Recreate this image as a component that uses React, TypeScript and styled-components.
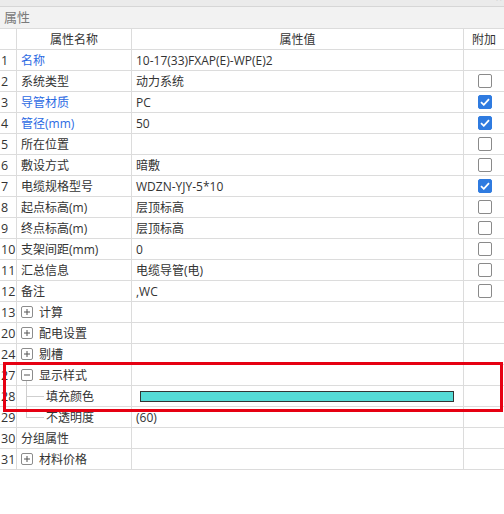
import React from "react";
import styled, { createGlobalStyle } from "styled-components";

const Global = createGlobalStyle`
  html, body { margin: 0; padding: 0; background: #fff; }
  body { font-family: "Open Sans", "Noto Sans CJK SC", sans-serif; font-size: 12px; color: #333; }
`;

const Panel = styled.div`
  position: relative;
  width: 504px;
  height: 514px;
  background: #fff;
  overflow: hidden;
`;

const TopStrip = styled.div`
  height: 6px;
  background: #ebebeb;
  border-bottom: 1px solid #d6d6d6;
  position: relative;
  overflow: hidden;
`;

const CloseMark = styled.span`
  position: absolute;
  right: 2px;
  top: -8px;
  font-size: 11px;
  line-height: 12px;
  color: #aaa;
`;

const Title = styled.div`
  height: 21px;
  line-height: 21px;
  background: #f2f2f2;
  color: #7a7a7a;
  padding-left: 4px;
  font-size: 13px;
  border-bottom: 1px solid #dcdcdc;
`;

const Grid = styled.div`
  display: grid;
  grid-template-columns: 17px 115px 332px 40px;
  grid-auto-rows: 21px;
`;

const Cell = styled.div<{ $center?: boolean; $blue?: boolean }>`
  border-right: 1px solid #dcdcdc;
  border-bottom: 1px solid #dcdcdc;
  display: flex;
  align-items: center;
  justify-content: ${(p) => (p.$center ? "center" : "flex-start")};
  padding-left: ${(p) => (p.$center ? "0" : "4px")};
  color: ${(p) => (p.$blue ? "#2d6be3" : "#333")};
  white-space: nowrap;
  overflow: visible;
  position: relative;
  box-sizing: border-box;
  &:nth-child(4n) { border-right: none; }
`;

const NumCell = styled(Cell)`
  padding-left: 1px;
  font-size: 12.5px;
  color: #333;
`;

const Box = styled.span<{ $checked?: boolean }>`
  width: 14px;
  height: 14px;
  box-sizing: border-box;
  border-radius: 2px;
  border: 1px solid ${(p) => (p.$checked ? "#2f7be0" : "#8a8a8a")};
  background: ${(p) => (p.$checked ? "#2f7be0" : "#fff")};
  display: flex;
  align-items: center;
  justify-content: center;
  margin-left: 1px;
`;

const Toggle = styled.span`
  width: 12px;
  height: 12px;
  box-sizing: border-box;
  border: 1px solid #8c8c8c;
  border-radius: 2px;
  display: inline-flex;
  align-items: center;
  justify-content: center;
  margin: 0 6px 0 0;
  flex: none;
`;

const Label = styled.span<{ $indent?: number }>`
  padding-left: ${(p) => p.$indent ?? 0}px;
`;

const TreeLine = styled.span<{ $last?: boolean }>`
  position: absolute;
  left: 9px;
  top: -1px;
  height: ${(p) => (p.$last ? "12px" : "22px")};
  width: 17px;
  border-left: 1px solid #cfcfcf;
  pointer-events: none;
  &::after {
    content: "";
    position: absolute;
    left: 0;
    top: 11px;
    width: 17px;
    border-top: 1px solid #cfcfcf;
  }
`;

const ToggleStem = styled.span`
  position: absolute;
  left: 9px;
  top: 16px;
  height: 5px;
  border-left: 1px solid #cfcfcf;
`;

const ColorBar = styled.span`
  display: block;
  width: 314px;
  height: 11px;
  box-sizing: border-box;
  border: 1px solid #333;
  background: #55dbd6;
  margin-left: 4px;
`;

const Highlight = styled.div`
  position: absolute;
  left: 3px;
  top: 362px;
  width: 500px;
  height: 50px;
  box-sizing: border-box;
  border: 3px solid #e60012;
  pointer-events: none;
`;

const Check = () => (
  <svg width="10" height="8" viewBox="0 0 10 8">
    <path d="M1 4.2 L3.8 6.8 L9 1.2" fill="none" stroke="#fff" strokeWidth="1.8" />
  </svg>
);

const PlusMinus = ({ plus }: { plus: boolean }) => (
  <svg width="8" height="8" viewBox="0 0 8 8">
    <path d={plus ? "M1 4 H7 M4 1 V7" : "M1 4 H7"} stroke="#555" strokeWidth="1" fill="none" />
  </svg>
);

type Row = {
  n: number;
  name: string;
  value?: string;
  blue?: boolean;
  check?: "on" | "off";
  toggle?: "+" | "-";
  kind?: "child" | "childLast";
  bar?: boolean;
};

const rows: Row[] = [
  { n: 1, name: "名称", value: "10-17(33)FXAP(E)-WP(E)2", blue: true },
  { n: 2, name: "系统类型", value: "动力系统", check: "off" },
  { n: 3, name: "导管材质", value: "PC", blue: true, check: "on" },
  { n: 4, name: "管径(mm)", value: "50", blue: true, check: "on" },
  { n: 5, name: "所在位置", value: "", check: "off" },
  { n: 6, name: "敷设方式", value: "暗敷", check: "off" },
  { n: 7, name: "电缆规格型号", value: "WDZN-YJY-5*10", check: "on" },
  { n: 8, name: "起点标高(m)", value: "层顶标高", check: "off" },
  { n: 9, name: "终点标高(m)", value: "层顶标高", check: "off" },
  { n: 10, name: "支架间距(mm)", value: "0", check: "off" },
  { n: 11, name: "汇总信息", value: "电缆导管(电)", check: "off" },
  { n: 12, name: "备注", value: ",WC", check: "off" },
  { n: 13, name: "计算", toggle: "+" },
  { n: 20, name: "配电设置", toggle: "+" },
  { n: 24, name: "剔槽", toggle: "+" },
  { n: 27, name: "显示样式", toggle: "-" },
  { n: 28, name: "填充颜色", kind: "child", bar: true },
  { n: 29, name: "不透明度", value: "(60)", kind: "childLast" },
  { n: 30, name: "分组属性" },
  { n: 31, name: "材料价格", toggle: "+" },
];

export default function App() {
  return (
    <Panel>
      <Global />
      <TopStrip>
        <CloseMark>×</CloseMark>
      </TopStrip>
      <Title>属性</Title>
      <Grid>
        <Cell $center />
        <Cell $center>属性名称</Cell>
        <Cell $center>属性值</Cell>
        <Cell $center>附加</Cell>
        {rows.map((r) => (
          <React.Fragment key={r.n}>
            <NumCell>{r.n}</NumCell>
            <Cell $blue={r.blue}>
              {r.toggle && (
                <Toggle>
                  <PlusMinus plus={r.toggle === "+"} />
                </Toggle>
              )}
              {r.toggle === "-" && <ToggleStem />}
              {r.kind && <TreeLine $last={r.kind === "childLast"} />}
              <Label $indent={r.kind ? 25 : 0}>{r.name}</Label>
            </Cell>
            <Cell>{r.bar ? <ColorBar /> : r.value}</Cell>
            <Cell $center>
              {r.check && <Box $checked={r.check === "on"}>{r.check === "on" && <Check />}</Box>}
            </Cell>
          </React.Fragment>
        ))}
      </Grid>
      <Highlight />
    </Panel>
  );
}
